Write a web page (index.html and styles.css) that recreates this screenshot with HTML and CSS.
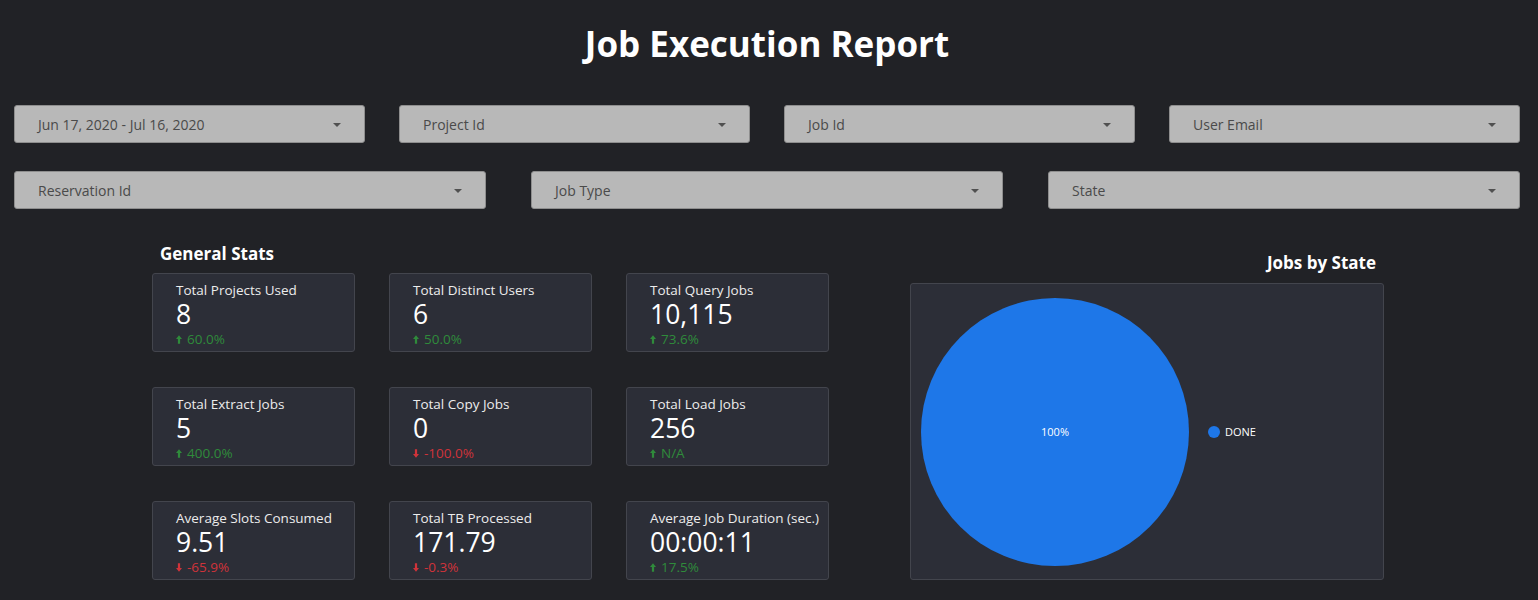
FILE: index.html
```html
<!DOCTYPE html>
<html>
<head>
<meta charset="utf-8">
<link rel="stylesheet" href="styles.css">
</head>
<body>
<div class="page">
  <h1 class="title">Job Execution Report</h1>

  <div class="filters filters-4">
    <div class="dd"><span>Jun 17, 2020 - Jul 16, 2020</span><i class="caret"></i></div>
    <div class="dd"><span>Project Id</span><i class="caret"></i></div>
    <div class="dd"><span>Job Id</span><i class="caret"></i></div>
    <div class="dd"><span>User Email</span><i class="caret"></i></div>
  </div>
  <div class="filters filters-3">
    <div class="dd"><span>Reservation Id</span><i class="caret"></i></div>
    <div class="dd"><span>Job Type</span><i class="caret"></i></div>
    <div class="dd"><span>State</span><i class="caret"></i></div>
  </div>

  <div class="main">
    <section class="stats">
      <h2 class="sec-title">General Stats</h2>
      <div class="grid">
        <div class="card"><div class="lbl">Total Projects Used</div><div class="val">8</div><div class="chg up"><svg class="arr" viewBox="0 0 7 10"><path d="M3.5 0L7 4.5H4.8V10H2.2V4.5H0Z"/></svg>60.0%</div></div>
        <div class="card"><div class="lbl">Total Distinct Users</div><div class="val">6</div><div class="chg up"><svg class="arr" viewBox="0 0 7 10"><path d="M3.5 0L7 4.5H4.8V10H2.2V4.5H0Z"/></svg>50.0%</div></div>
        <div class="card"><div class="lbl">Total Query Jobs</div><div class="val">10,115</div><div class="chg up"><svg class="arr" viewBox="0 0 7 10"><path d="M3.5 0L7 4.5H4.8V10H2.2V4.5H0Z"/></svg>73.6%</div></div>

        <div class="card"><div class="lbl">Total Extract Jobs</div><div class="val">5</div><div class="chg up"><svg class="arr" viewBox="0 0 7 10"><path d="M3.5 0L7 4.5H4.8V10H2.2V4.5H0Z"/></svg>400.0%</div></div>
        <div class="card"><div class="lbl">Total Copy Jobs</div><div class="val">0</div><div class="chg down"><svg class="arr" viewBox="0 0 7 10"><path d="M3.5 10L7 5.5H4.8V0H2.2V5.5H0Z"/></svg>-100.0%</div></div>
        <div class="card"><div class="lbl">Total Load Jobs</div><div class="val">256</div><div class="chg up"><svg class="arr" viewBox="0 0 7 10"><path d="M3.5 0L7 4.5H4.8V10H2.2V4.5H0Z"/></svg>N/A</div></div>

        <div class="card"><div class="lbl">Average Slots Consumed</div><div class="val">9.51</div><div class="chg down"><svg class="arr" viewBox="0 0 7 10"><path d="M3.5 10L7 5.5H4.8V0H2.2V5.5H0Z"/></svg>-65.9%</div></div>
        <div class="card"><div class="lbl">Total TB Processed</div><div class="val">171.79</div><div class="chg down"><svg class="arr" viewBox="0 0 7 10"><path d="M3.5 10L7 5.5H4.8V0H2.2V5.5H0Z"/></svg>-0.3%</div></div>
        <div class="card"><div class="lbl">Average Job Duration (sec.)</div><div class="val">00:00:11</div><div class="chg up"><svg class="arr" viewBox="0 0 7 10"><path d="M3.5 0L7 4.5H4.8V10H2.2V4.5H0Z"/></svg>17.5%</div></div>
      </div>
    </section>

    <section class="chart">
      <h2 class="chart-title">Jobs by State</h2>
      <div class="panel">
        <div class="pie"><span>100%</span></div>
        <div class="legend"><i class="dot"></i><span>DONE</span></div>
      </div>
    </section>
  </div>
</div>
</body>
</html>
```

FILE: styles.css
```css
* { box-sizing: border-box; }
html, body {
  margin: 0;
  padding: 0;
  background: #212226;
  font-family: "Open Sans", "Noto Sans", sans-serif;
  color: #ffffff;
}
.page {
  width: 1538px;
  height: 600px;
  overflow: hidden;
  padding: 0 18px 0 14px;
}
.title {
  margin: 0;
  padding-top: 20px;
  height: 68px;
  line-height: 48px;
  font-size: 35px;
  font-weight: 700;
  text-align: center;
  color: #ffffff;
}
.filters {
  display: grid;
  margin-top: 37px;
}
.filters-4 {
  grid-template-columns: repeat(4, 351px);
  column-gap: 34px;
}
.filters-3 {
  margin-top: 28px;
  grid-template-columns: repeat(3, 472px);
  column-gap: 45px;
}
.dd {
  height: 38px;
  background: #b8b8b8;
  border: 1px solid #8e8e8e;
  border-radius: 3px;
  display: flex;
  align-items: center;
  justify-content: space-between;
  padding: 0 23px 0 23px;
  font-size: 14px;
  color: #4a4a4a;
}
.caret {
  width: 0;
  height: 0;
  border-left: 4px solid transparent;
  border-right: 4px solid transparent;
  border-top: 4px solid #505050;
  margin-top: 1px;
}
.main {
  display: flex;
  padding-left: 138px;
  margin-top: 33px;
}
.stats {
  width: 677px;
}
.sec-title {
  margin: 0 0 7px 8px;
  font-size: 17px;
  line-height: 24px;
  font-weight: 700;
  color: #ffffff;
}
.grid {
  display: grid;
  grid-template-columns: repeat(3, 203px);
  column-gap: 34px;
  row-gap: 35px;
}
.card {
  height: 79px;
  background: #2c2e37;
  border: 1px solid #43454d;
  border-radius: 3px;
  padding: 7px 0 0 23px;
}
.lbl {
  font-size: 13.5px;
  line-height: 18px;
  color: #ececec;
  white-space: nowrap;
}
.val {
  font-size: 26.5px;
  line-height: 32px;
  color: #ffffff;
  margin-top: -1px;
}
.chg {
  font-size: 13.5px;
  line-height: 16px;
  display: flex;
  align-items: center;
  margin-top: 1px;
}
.chg.up { color: #2f8b3b; }
.chg.down { color: #d0333a; }
.arr {
  width: 6px;
  height: 9px;
  margin-right: 5px;
  fill: currentColor;
}
.chart {
  margin-left: 81px;
  width: 474px;
  display: flex;
  flex-direction: column;
}
.chart-title {
  margin: 9px 8px 8px 0;
  align-self: flex-end;
  font-size: 17px;
  line-height: 24px;
  font-weight: 700;
  color: #ffffff;
}
.panel {
  height: 297px;
  background: #2c2e37;
  border: 1px solid #43454d;
  border-radius: 3px;
  display: flex;
  align-items: center;
  padding-left: 10px;
}
.pie {
  width: 268px;
  height: 268px;
  border-radius: 50%;
  background: #1e77e8;
  display: flex;
  align-items: center;
  justify-content: center;
  font-size: 11px;
  color: #ffffff;
  flex: none;
}
.legend {
  display: flex;
  align-items: center;
  margin-left: 19px;
  font-size: 11px;
  color: #ffffff;
}
.dot {
  width: 12px;
  height: 12px;
  border-radius: 50%;
  background: #1e77e8;
  margin-right: 5px;
}
```
